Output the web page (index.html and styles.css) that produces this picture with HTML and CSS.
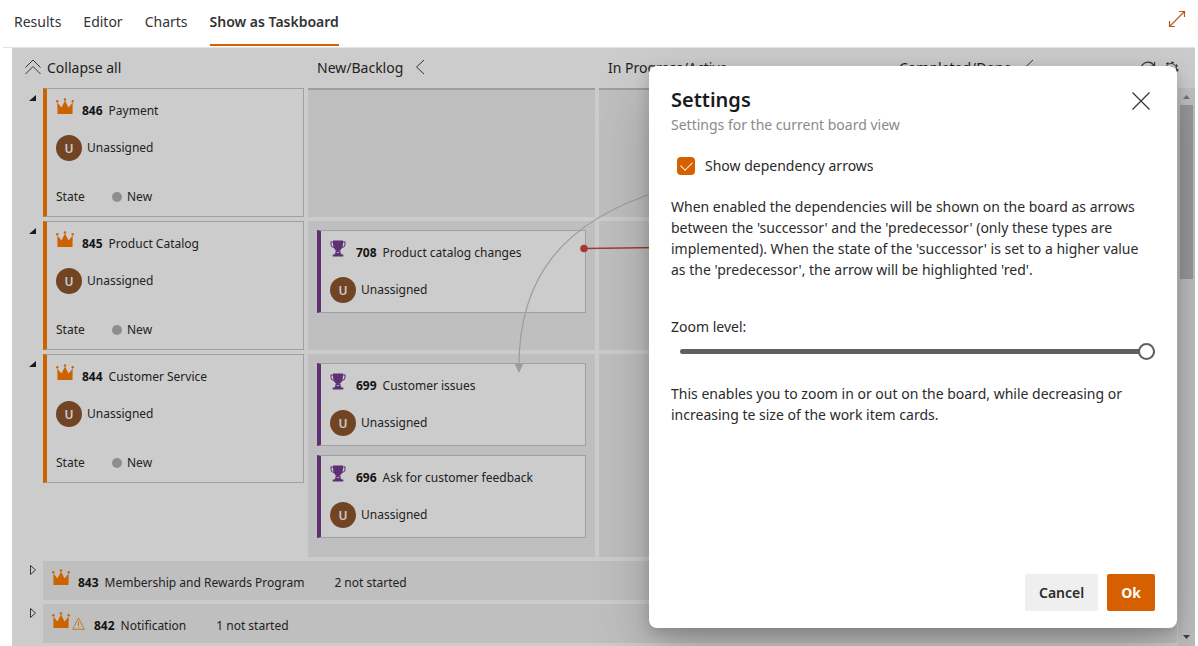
FILE: index.html
```html
<!DOCTYPE html>
<html lang="en">
<head>
<meta charset="utf-8">
<title>Taskboard</title>
<link rel="stylesheet" href="styles.css">
</head>
<body>
<svg class="defs" aria-hidden="true">
  <symbol id="crown" viewBox="0 0 18 17">
    <path d="M1.500 16 1.300 4.500 5.500 9.500 9 2.500 12.500 9.500 16.700 4.500 16.500 16Z"/>
    <circle cx="1.300" cy="3.200" r="1.200"/><circle cx="9" cy="1.500" r="1.200"/><circle cx="16.700" cy="3.200" r="1.200"/>
  </symbol>
  <symbol id="trophy" viewBox="0 0 16 17">
    <path d="M3 .5H13V1.500H15.500V4C15.500 6.500 14 7.700 12 8 11.300 9.500 10.300 10.500 9.300 11H6.700C5.700 10.500 4.700 9.500 4 8 2 7.700.5 6.500.5 4V1.500H3ZM3 2.500H1.500V4C1.500 5.700 2.300 6.600 3.600 6.900 3.200 5.700 3 4.500 3 2.500ZM13 2.500C13 4.500 12.800 5.700 12.400 6.900 13.700 6.600 14.500 5.700 14.500 4V2.500ZM5.500 11H10.500V12.500L11.500 14.500H13.300V16.500H2.700V14.500H4.500L5.500 12.500ZM6.500 12.800H9.500L9 11.900H7Z" fill-rule="evenodd"/>
  </symbol>
  <symbol id="chevron" viewBox="0 0 10 16"><path d="M9 1 1.500 8 9 15" fill="none" stroke="currentColor"/></symbol>
</svg>

<header class="topbar">
  <nav class="tabs">
    <a class="tab" href="#results">Results</a>
    <a class="tab" href="#editor">Editor</a>
    <a class="tab" href="#charts">Charts</a>
    <a class="tab active" href="#taskboard" aria-current="page">Show as Taskboard</a>
  </nav>
  <button class="icon-btn expand" aria-label="Full screen">
    <svg width="18" height="18" viewBox="0 0 18 18" fill="none" stroke="currentColor"><path d="M1.500 16.500 16.500 1.500M11 1.500H16.500V7M1.500 11V16.500H7" stroke-width="1.200"/></svg>
  </button>
</header>

<main class="board">
  <div class="board-head">
    <button class="collapse">
      <svg width="16" height="16" viewBox="0 0 16 16" fill="none" stroke="currentColor"><path d="M.5 8.500 8 1 15.500 8.500M.5 15 8 7.500 15.500 15"/></svg>
      Collapse all
    </button>
    <div class="col-head">New/Backlog <button class="icon-btn" aria-label="Collapse New/Backlog"><svg width="10" height="16"><use href="#chevron"/></svg></button></div>
    <div class="col-head">In Progress/Active</div>
    <div class="col-head">Completed/Done <button class="icon-btn" aria-label="Collapse Completed/Done"><svg width="10" height="16"><use href="#chevron"/></svg></button>
      <span class="tools">
        <button class="icon-btn" aria-label="Refresh"><svg width="16" height="16" viewBox="0 0 16 16" fill="none" stroke="currentColor"><path d="M14 4.500A7 7 0 1 0 15 8M14.500 1V5H10.500" stroke-width="1.200"/></svg></button>
        <button class="icon-btn" aria-label="Board settings"><svg width="16" height="16" viewBox="0 0 16 16" fill="none" stroke="currentColor"><circle cx="8" cy="8" r="2.500"/><circle cx="8" cy="8" r="5.500"/><circle cx="8" cy="8" r="6.700" stroke-width="1.600" stroke-dasharray="2.600 2.660"/></svg></button>
      </span>
    </div>
  </div>

  <div class="board-body">
    <div class="rows">
      <section class="row first">
        <button class="toggle" aria-label="Collapse 846" aria-expanded="true"><svg width="8" height="8"><path d="M7 1V7H0Z"/></svg></button>
        <article class="card epic">
          <h3 class="card-title"><svg class="crown"><use href="#crown"/></svg><b>846</b> Payment</h3>
          <p class="person"><span class="avatar">U</span>Unassigned</p>
          <p class="state"><span class="key">State</span><i class="dot"></i>New</p>
        </article>
        <div class="lane"></div><div class="lane"></div><div class="lane"></div>
      </section>

      <section class="row">
        <button class="toggle" aria-label="Collapse 845" aria-expanded="true"><svg width="8" height="8"><path d="M7 1V7H0Z"/></svg></button>
        <article class="card epic">
          <h3 class="card-title"><svg class="crown"><use href="#crown"/></svg><b>845</b> Product Catalog</h3>
          <p class="person"><span class="avatar">U</span>Unassigned</p>
          <p class="state"><span class="key">State</span><i class="dot"></i>New</p>
        </article>
        <div class="lane">
          <article class="card feature">
            <h3 class="card-title"><svg class="trophy"><use href="#trophy"/></svg><b>708</b> Product catalog changes</h3>
            <p class="person"><span class="avatar">U</span>Unassigned</p>
          </article>
        </div>
        <div class="lane"></div><div class="lane"></div>
      </section>

      <section class="row">
        <button class="toggle" aria-label="Collapse 844" aria-expanded="true"><svg width="8" height="8"><path d="M7 1V7H0Z"/></svg></button>
        <article class="card epic">
          <h3 class="card-title"><svg class="crown"><use href="#crown"/></svg><b>844</b> Customer Service</h3>
          <p class="person"><span class="avatar">U</span>Unassigned</p>
          <p class="state"><span class="key">State</span><i class="dot"></i>New</p>
        </article>
        <div class="lane tall">
          <article class="card feature">
            <h3 class="card-title"><svg class="trophy"><use href="#trophy"/></svg><b>699</b> Customer issues</h3>
            <p class="person"><span class="avatar">U</span>Unassigned</p>
          </article>
          <article class="card feature">
            <h3 class="card-title"><svg class="trophy"><use href="#trophy"/></svg><b>696</b> Ask for customer feedback</h3>
            <p class="person"><span class="avatar">U</span>Unassigned</p>
          </article>
        </div>
        <div class="lane"></div><div class="lane"></div>
      </section>

      <section class="row closed">
        <button class="toggle" aria-label="Expand 843" aria-expanded="false"><svg width="8" height="10"><path class="outline" d="M1.500 .5 6.500 5 1.500 9.500Z"/></svg></button>
        <div class="summary"><svg class="crown"><use href="#crown"/></svg><b>843</b> <span>Membership and Rewards Program</span><span class="count">2 not started</span></div>
      </section>
      <section class="row closed">
        <button class="toggle" aria-label="Expand 842" aria-expanded="false"><svg width="8" height="10"><path class="outline" d="M1.500 .5 6.500 5 1.500 9.500Z"/></svg></button>
        <div class="summary"><svg class="crown"><use href="#crown"/></svg><svg class="warn" viewBox="0 0 13 13" fill="none" stroke="currentColor"><path d="M6.500 1 12.300 12.300H.7ZM6.500 4.500V9M6.500 10V11.200"/></svg><b>842</b> <span>Notification</span><span class="count">1 not started</span></div>
      </section>
    </div>
    <div class="scrollbar" aria-hidden="true">
      <svg width="17" height="17"><path d="M5 11 8.500 7 12 11Z" fill="#8f8f8f"/></svg>
      <div class="thumb"></div>
      <svg class="down" width="17" height="17"><path d="M5 6 12 6 8.500 10Z" fill="#505050"/></svg>
    </div>
  </div>

  <svg class="links" viewBox="12 48 700 500" fill="none" aria-hidden="true">
    <path d="M519 366C519 280 560 222 660 191" stroke="#c4c4c4" stroke-width="1.200"/>
    <path d="M514.500 363.500H523.500L519 373Z" fill="#c4c4c4"/>
    <path d="M584 248.500 660 247.500" stroke="#cd4944" stroke-width="1.300"/>
    <circle cx="584" cy="248.500" r="3.800" fill="#cd4944"/>
  </svg>

  <div class="backdrop"></div>

  <section class="panel" role="dialog" aria-labelledby="panel-title">
    <header class="panel-head">
      <div>
        <h2 id="panel-title">Settings</h2>
        <p class="sub">Settings for the current board view</p>
      </div>
      <button class="icon-btn" aria-label="Close"><svg width="18" height="18" viewBox="0 0 18 18" stroke="currentColor"><path d="M.5.5 17.500 17.500M17.500.5.5 17.500" stroke-width="1.200"/></svg></button>
    </header>
    <label class="check"><input type="checkbox" checked>Show dependency arrows</label>
    <p class="text">When enabled the dependencies will be shown on the board as arrows between the 'successor' and the 'predecessor' (only these types are implemented). When the state of the 'successor' is set to a higher value as the 'predecessor', the arrow will be highlighted 'red'.</p>
    <label class="zoom-label" for="zoom">Zoom level:</label>
    <input id="zoom" class="slider" type="range" min="0" max="100" value="100">
    <p class="text hint">This enables you to zoom in or out on the board, while decreasing or increasing te size of the work item cards.</p>
    <footer class="actions">
      <button class="btn">Cancel</button>
      <button class="btn primary">Ok</button>
    </footer>
  </section>
</main>
</body>
</html>
```
FILE: styles.css
```css
* { box-sizing: border-box; }
html, body { height: 100%; }
body {
  margin: 0;
  display: flex;
  flex-direction: column;
  background: #fff;
  color: #2b2b2b;
  font: 14px/20px "Segoe UI", "Noto Sans", "Open Sans", sans-serif;
  overflow: hidden;
}
h2, h3, p { margin: 0; }
button { font: inherit; color: inherit; border: 0; padding: 0; background: none; }
svg { display: block; flex: none; }
b { font-weight: 700; color: #1a1a1a; }
.defs { position: absolute; width: 0; height: 0; }
.icon-btn { display: flex; align-items: center; }

.topbar {
  display: flex;
  flex: none;
  justify-content: space-between;
  height: 48px;
  margin: 0 3px;
  padding: 0 9px 0 11px;
  border-bottom: 1px solid #e2e2e2;
}
.tabs { display: flex; gap: 22px; height: 46px; }
.tab {
  padding-top: 12px;
  color: #333;
  text-decoration: none;
  border-bottom: 2px solid transparent;
}
.tab.active { font-weight: 600; border-color: #d65f00; }
.expand { height: 38px; color: #b85a1a; }

.board {
  position: relative;
  flex: 1;
  min-height: 0;
  display: flex;
  flex-direction: column;
  margin: 0 3px 0 12px;
  overflow: hidden;
}
.board-head, .row {
  display: grid;
  grid-template-columns: 27px 261px repeat(3, minmax(0, 1fr));
  column-gap: 4px;
}
.board-head { flex: none; height: 40px; padding-right: 18px; }
.collapse {
  grid-column: 1 / 3;
  display: flex;
  align-items: center;
  gap: 6px;
  padding-left: 13px;
}
.collapse svg, .col-head svg { color: #444; }
.collapse svg, .col-head > .icon-btn svg { margin-bottom: 3px; }
.col-head { display: flex; align-items: center; gap: 12px; padding-left: 9px; }
.tools { display: flex; gap: 7px; margin: 2px -2px 0 auto; }

.board-body { flex: 1; min-height: 0; display: flex; }
.rows { flex: 1; display: flex; flex-direction: column; gap: 4px; padding-right: 1px; font-size: 12px; }
.row { min-height: 129px; flex: none; }
.toggle { display: flex; align-items: flex-start; justify-content: flex-end; padding: 6px 2px 0 0; }
.closed .toggle { padding-top: 4px; }
.toggle svg { fill: #222; }
.toggle .outline { fill: none; stroke: #444; }
.lane { display: flex; flex-direction: column; gap: 9px; padding: 9px; background: #efefef; }
.first .lane { border-top: 2px solid #c6c6c6; }
.lane.tall { padding-bottom: 19px; }

.card { background: #fff; border: 1px solid #c8c8c8; border-left-width: 4px; }
.epic { align-self: start; height: 129px; border-left-color: #ff7b00; padding: 9px; }
.feature { height: 83px; border-left-color: #773b93; padding: 9px; }
.card-title { display: flex; gap: 6px; height: 26px; font-size: 12px; font-weight: 400; line-height: 26px; }
.crown { width: 18px; height: 17px; fill: #ff7b00; }
.trophy { width: 16px; height: 17px; fill: #773b93; }
.card-title svg { margin-right: 2px; }
.feature .card-title svg { margin-right: 4px; }
.person { display: flex; align-items: center; gap: 5px; margin-top: 11px; }
.avatar {
  width: 26px;
  height: 26px;
  border-radius: 50%;
  background: #8e562e;
  color: #fff;
  font-weight: 600;
  line-height: 27px;
  text-align: center;
}
.state { display: flex; align-items: center; margin-top: 26px; }
.key { width: 56px; }
.dot { width: 10px; height: 10px; margin-right: 5px; border-radius: 50%; background: #b2b2b2; }

.closed { min-height: 39px; }
.summary { grid-column: 2 / -1; display: flex; align-items: center; gap: 6px; padding: 4px 0 0 9px; background: #efefef; }
.summary .crown { margin: -11px 2px 0 0; }
.summary .warn { width: 13px; height: 13px; margin: -5px 3px 0 -6px; color: #f0963c; }
.summary .count { margin-left: 24px; }

.scrollbar { width: 17px; display: flex; flex-direction: column; background: #f1f1f1; }
.thumb { height: 174px; margin: 0 2px; background: #c1c1c1; }
.down { margin-top: auto; }

.links { position: absolute; top: 0; left: 0; width: 700px; height: 500px; }
.backdrop { position: absolute; inset: 0; background: rgba(0, 0, 0, .2); }

.panel {
  position: absolute;
  top: 18px;
  right: 18px;
  bottom: 18px;
  width: 528px;
  display: flex;
  flex-direction: column;
  padding: 20px 22px 17px;
  border-radius: 8px;
  background: #fff;
  box-shadow: 0 25px 58px rgba(0, 0, 0, .22), 0 5px 14px rgba(0, 0, 0, .18);
}
.panel-head { display: flex; justify-content: space-between; align-items: flex-start; }
.panel-head .icon-btn { margin: 6px 5px 0 0; color: #333; }
.panel h2 { font-size: 20px; line-height: 28px; font-weight: 600; color: #1a1a1a; }
.sub { line-height: 22px; color: #8a8a8a; }
.check { display: flex; align-items: center; gap: 10px; margin: 20px 0 0 6px; }
.check input {
  appearance: none;
  width: 18px;
  height: 18px;
  margin: 0;
  border-radius: 4px;
  background: #d65f00;
  display: grid;
  place-items: center;
}
.check input:checked::before {
  content: "";
  width: 10px;
  height: 6px;
  margin-top: -3px;
  border: solid #fff;
  border-width: 0 0 1px 1px;
  transform: rotate(-45deg);
}
.text { margin-top: 20px; padding-right: 8px; line-height: 21px; }
.zoom-label { margin-top: 37px; }
.slider { appearance: none; height: 18px; margin: 5px 0 0 9px; background: none; }
.slider::-webkit-slider-runnable-track { height: 5px; border-radius: 3px; background: #5f5f5f; }
.slider::-webkit-slider-thumb {
  appearance: none;
  width: 17px;
  height: 17px;
  margin-top: -6px;
  border: 2px solid #5f5f5f;
  border-radius: 50%;
  background: #fff;
}
.text.hint { margin-top: 23px; }
.actions { display: flex; justify-content: flex-end; gap: 9px; margin-top: auto; }
.btn { height: 37px; padding: 0 14px; border-radius: 2px; background: #efefef; font-weight: 600; }
.btn.primary { background: #d65f00; color: #fff; font-weight: 700; }
```
